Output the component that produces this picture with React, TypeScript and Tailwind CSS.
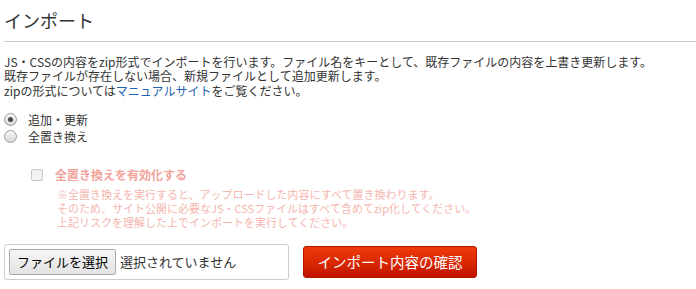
import { useState } from "react";

const font = { fontFamily: '"Noto Sans CJK JP", "Noto Sans", sans-serif' };

function Radio({ checked, label, onSelect }: { checked: boolean; label: string; onSelect: () => void }) {
  return (
    <label className="flex h-[17px] cursor-pointer items-center" onClick={onSelect}>
      <span className="flex h-[13px] w-[13px] items-center justify-center rounded-full border border-[#9a9a9a] bg-gradient-to-b from-[#f7f7f7] to-[#d9d9d9]">
        {checked ? <span className="h-[5px] w-[5px] rounded-full bg-[#4a4a4a]" /> : null}
      </span>
      <span className="ml-[11px] text-[12px] leading-[17px] text-[#333]">{label}</span>
    </label>
  );
}

export default function App() {
  const [mode, setMode] = useState<"update" | "replace">("update");

  return (
    <div className="w-[696px] bg-white pl-[4px]" style={font}>
      <h2 className="border-b border-[#cccccc] pt-2 pb-[9px] text-[18px] font-normal leading-[24px] text-[#333]">
        インポート
      </h2>

      <p className="mt-[13px] text-[12px] leading-[14.4px] text-[#333]">
        JS・CSSの内容をzip形式でインポートを行います。ファイル名をキーとして、既存ファイルの内容を上書き更新します。
        <br />
        既存ファイルが存在しない場合、新規ファイルとして追加更新します。
        <br />
        zipの形式については<a className="text-[#1f63b0]">マニュアルサイト</a>をご覧ください。
      </p>

      <div className="mt-[13px] flex flex-col">
        <Radio checked={mode === "update"} label="追加・更新" onSelect={() => setMode("update")} />
        <Radio checked={mode === "replace"} label="全置き換え" onSelect={() => setMode("replace")} />
      </div>

      <div className="mt-[21px] ml-[27px]">
        <div className="flex h-[18px] items-center">
          <span className="h-[12px] w-[12px] rounded-[2px] border border-[#c8c8c8] bg-[#f2f2f2]" />
          <span className="ml-[12px] text-[12px] font-bold leading-[18px] text-[#f2a39b]">全置き換えを有効化する</span>
        </div>
        <p className="mt-[3px] ml-[26px] text-[11px] leading-[14px] text-[#f4b6ae]">
          ※全置き換えを実行すると、アップロードした内容にすべて置き換わります。
          <br />
          そのため、サイト公開に必要なJS・CSSファイルはすべて含めてzip化してください。
          <br />
          上記リスクを理解した上でインポートを実行してください。
        </p>
      </div>

      <div className="mt-[15px] flex items-center gap-[14px]">
        <div className="flex h-[36px] w-[285px] items-center rounded-[3px] border border-[#cccccc] pl-[4px]">
          <span className="flex h-[26px] w-[107px] items-center justify-center rounded-[2px] border border-[#a9a9a9] bg-gradient-to-b from-[#f6f6f6] to-[#e3e3e3] text-[13px] text-black">
            ファイルを選択
          </span>
          <span className="ml-[4px] text-[13px] text-[#333]">選択されていません</span>
        </div>
        <button
          type="button"
          className="flex h-[32px] w-[174px] items-center justify-center rounded-[3px] border border-[#b51200] bg-gradient-to-b from-[#f03a0a] to-[#c21300] text-[14.5px] text-white"
        >
          インポート内容の確認
        </button>
      </div>
    </div>
  );
}
